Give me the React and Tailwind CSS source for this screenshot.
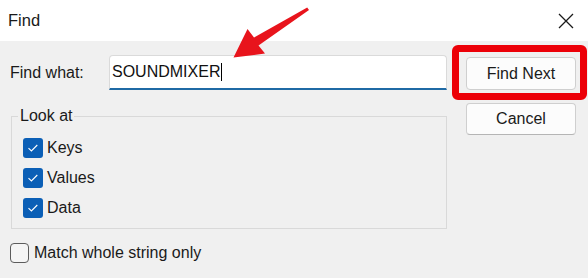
import React from 'react'

const font = { fontFamily: '"Liberation Sans", Arial, sans-serif' }

const Check = ({ label }) => (
  <label className="flex items-center gap-[4px] h-[20px]">
    <span className="w-[20px] h-[20px] rounded-[3px] bg-[#0b5fb6] flex items-center justify-center">
      <svg width="20" height="20" viewBox="0 0 20 20">
        <path d="M5.5 10.2 L8.4 13 L14.3 7" fill="none" stroke="#fff" strokeWidth="1.1" />
      </svg>
    </span>
    <span className="text-[16px] text-[#1a1a1a] leading-[20px]">{label}</span>
  </label>
)

export default function App() {
  return (
    <div className="relative w-[588px] h-[278px] flex flex-col bg-[#f0f0f0] overflow-hidden" style={font}>
      {/* Title bar */}
      <div className="h-[41px] bg-white flex items-center justify-between shrink-0">
        <span className="pl-[8px] text-[16.5px] text-[#1a1a1a]">Find</span>
        <svg className="mr-[14px]" width="16" height="16" viewBox="0 0 16 16">
          <path d="M1 1 L15 15 M15 1 L1 15" stroke="#1a1a1a" strokeWidth="1.3" />
        </svg>
      </div>

      {/* Body */}
      <div className="flex-1 flex pl-[10px] pr-[12px] gap-[19px]">
        <div className="flex-1 flex flex-col">
          <div className="mt-[14px] h-[35px] flex items-center">
            <span className="w-[99px] text-[16px] text-[#1a1a1a]">Find what:</span>
            <div className="flex-1 h-[35px] bg-white border border-[#dadada] border-b-2 border-b-[#1f6aa5] rounded-t-[4px] flex items-center pl-[2px]">
              <span className="text-[16px] text-[#111]">SOUNDMIXER</span>
              <span className="ml-[1px] w-[1px] h-[18px] bg-black"></span>
            </div>
          </div>

          <fieldset className="mt-[16px] ml-[1px] border border-[#d9d9d9] p-0 m-0">
            <legend className="ml-[6px] px-[2px] text-[16px] leading-[20px] text-[#1a1a1a]">Look at</legend>
            <div className="flex flex-col gap-[10px] pl-[11px] pt-[12px] pb-[10px]">
              <Check label="Keys" />
              <Check label="Values" />
              <Check label="Data" />
            </div>
          </fieldset>

          <label className="mt-[14px] flex items-center gap-[5px] h-[20px]">
            <span className="w-[19px] h-[20px] rounded-[4px] border border-[#5c5c5c] bg-[#f5f5f5]"></span>
            <span className="text-[16px] text-[#1a1a1a] leading-[20px]">Match whole string only</span>
          </label>
        </div>

        <div className="w-[110px] flex flex-col pt-[16px] gap-[13px]">
          <button className="h-[33px] rounded-[4px] border border-[#cfcfcf] bg-[#fcfcfc] text-[16px] text-[#1a1a1a]">Find Next</button>
          <button className="h-[32px] rounded-[4px] border border-[#cfcfcf] border-b-[#b5b5b5] bg-[#fcfcfc] text-[16px] text-[#1a1a1a]">Cancel</button>
        </div>
      </div>

      {/* Red highlight around Find Next */}
      <div className="absolute left-[452px] top-[45px] w-[135px] h-[55px] border-[7px] border-[#ec0008] rounded-[6px] pointer-events-none"></div>

      {/* Red arrow annotation */}
      <svg className="absolute left-0 top-0 pointer-events-none" width="588" height="278" viewBox="0 0 588 278">
        <polygon
          points="307.2,7.6 254,37.5 247.5,29 233.5,57.5 265,53.5 258.5,45.5 309,10"
          fill="#e8141c"
        />
      </svg>
    </div>
  )
}
